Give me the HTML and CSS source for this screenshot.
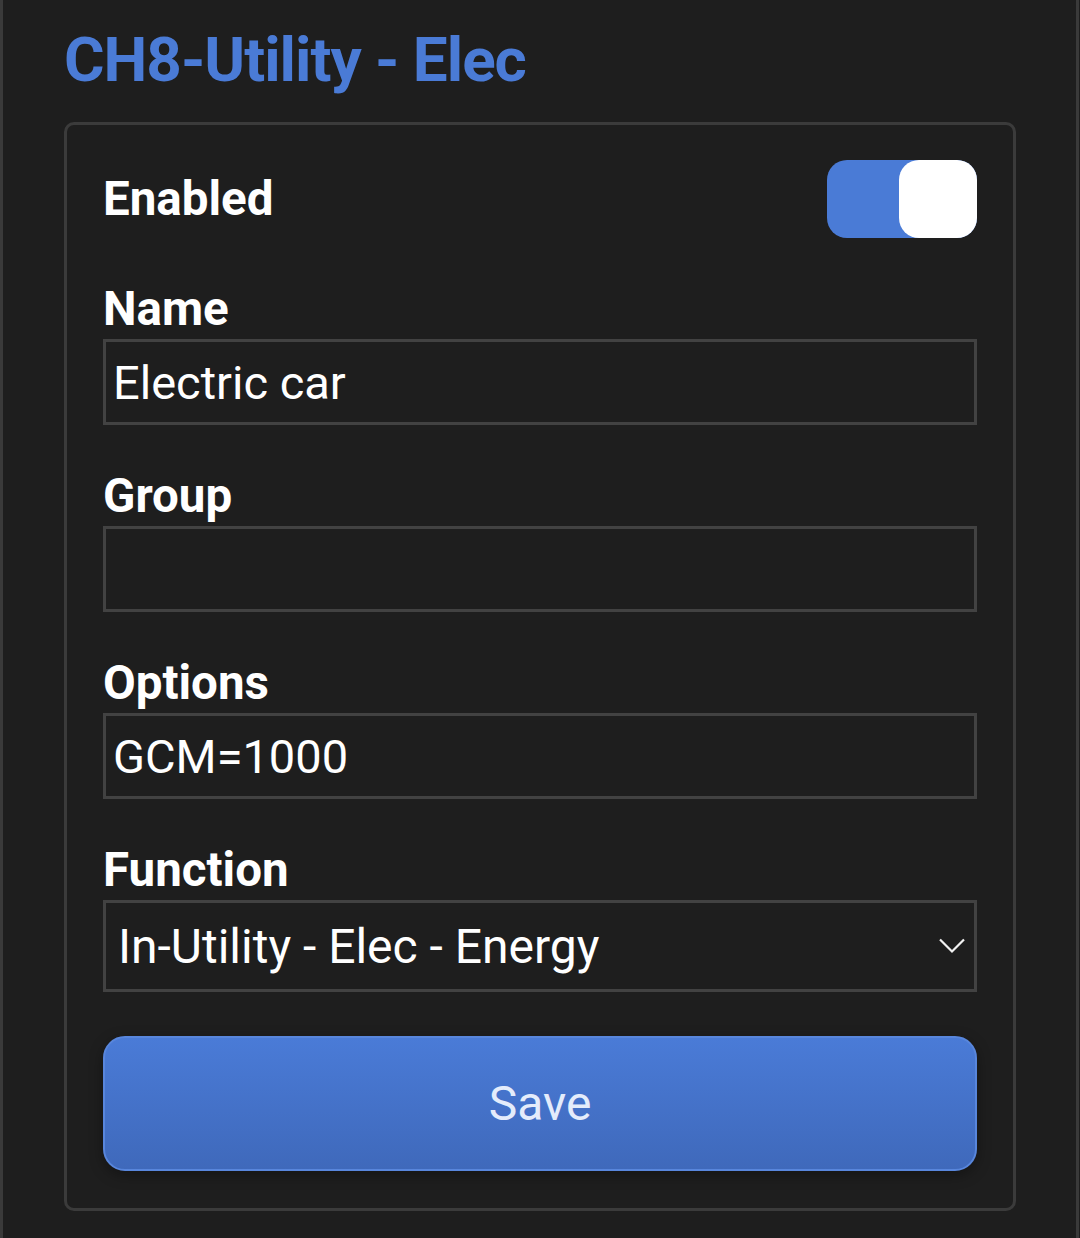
FILE: index.html
```html
<!DOCTYPE html>
<html lang="en">
<head>
    <meta charset="UTF-8">
    <meta name="viewport" content="width=device-width, initial-scale=1.0">
    <title>CH8-Utility - Elec</title>
    <link rel="stylesheet" href="styles.css">
</head>
<body>

<div class="panel">
    <h1 class="channel-title">CH8-Utility - Elec</h1>

    <form class="channel-card">
        <!-- Enabled switch -->
        <div class="switch-row">
            <span class="field-label">Enabled</span>
            <label class="switch">
                <input type="checkbox" checked>
                <span class="switch-track"><span class="switch-knob"></span></span>
            </label>
        </div>

        <div class="field">
            <label class="field-label" for="name">Name</label>
            <input class="field-input" id="name" type="text" value="Electric car">
        </div>

        <div class="field">
            <label class="field-label" for="group">Group</label>
            <input class="field-input" id="group" type="text" value="">
        </div>

        <div class="field">
            <label class="field-label" for="options">Options</label>
            <input class="field-input" id="options" type="text" value="GCM=1000">
        </div>

        <div class="field">
            <label class="field-label" for="function">Function</label>
            <div class="select-wrap">
                <select class="field-select" id="function">
                    <option>In-Utility - Elec - Energy</option>
                    <option>In-Utility - Elec - Power</option>
                    <option>Out-Load - Elec - Energy</option>
                </select>
                <svg class="select-arrow" width="26" height="16" viewBox="0 0 26 16">
                    <path d="M1 1.5 L13 13.5 L25 1.5" fill="none" stroke="#f2f2f2" stroke-width="2.2"/>
                </svg>
            </div>
        </div>

        <button class="save-btn" type="button">Save</button>
    </form>
</div>

</body>
</html>
```

FILE: styles.css
```css
/* Global Styling */
body {
    margin: 0;
    background-color: #1e1e1e;
    font-family: 'Roboto', 'Liberation Sans', sans-serif;
    color: #ffffff;
}

/* Outer panel with side rules */
.panel {
    box-sizing: border-box;
    width: 1079px;
    min-height: 1238px;
    border-left: 3px solid #3a3a3a;
    border-right: 3px solid #3a3a3a;
    padding: 23px 61px 0 61px;
}

/* Title */
.channel-title {
    margin: 0 0 25px 0;
    font-size: 62px;
    line-height: 1.2;
    font-weight: 700;
    letter-spacing: -1px;
    color: #4a7bd6;
}

/* Card */
.channel-card {
    box-sizing: border-box;
    width: 952px;
    border: 3px solid #3b3b3b;
    border-radius: 10px;
    padding: 35px 36px 37px 36px;
    display: flex;
    flex-direction: column;
    gap: 43px;
}

.field-label {
    display: block;
    font-size: 47.5px;
    line-height: 56px;
    font-weight: 700;
    color: #ffffff;
}

/* Enabled row */
.switch-row {
    display: flex;
    justify-content: space-between;
    align-items: center;
    height: 78px;
}

.switch input {
    display: none;
}

.switch-track {
    display: flex;
    justify-content: flex-end;
    width: 150px;
    height: 78px;
    border-radius: 20px;
    background-color: #4a7bd6;
    cursor: pointer;
}

.switch-knob {
    width: 78px;
    height: 78px;
    border-radius: 20px;
    background-color: #ffffff;
}

/* Fields */
.field {
    display: flex;
    flex-direction: column;
    gap: 2px;
}

.field-input,
.field-select {
    box-sizing: border-box;
    width: 100%;
    height: 86px;
    margin: 0;
    padding: 0 7px;
    border: 3px solid #424242;
    border-radius: 0;
    background-color: #1e1e1e;
    color: #ffffff;
    font-family: 'Roboto', 'Liberation Sans', sans-serif;
    font-size: 47px;
    outline: none;
}

.select-wrap {
    position: relative;
}

.field-select {
    height: 92px;
    padding: 0 60px 0 12px;
    font-size: 48px;
    appearance: none;
    -webkit-appearance: none;
}

.select-arrow {
    position: absolute;
    right: 12px;
    top: 38px;
    pointer-events: none;
}

/* Save Button */
.save-btn {
    height: 135px;
    margin-top: 1px;
    border: 2px solid #5886dc;
    border-radius: 22px;
    background: linear-gradient(to bottom, #4a7bd7, #3f69bb);
    box-shadow: 0 4px 14px rgba(0, 0, 0, 0.35);
    color: #e4ecfb;
    font-family: 'Roboto', 'Liberation Sans', sans-serif;
    font-size: 48px;
    cursor: pointer;
}

.save-btn:hover {
    background: linear-gradient(to bottom, #5584da, #4570c2);
}
```
